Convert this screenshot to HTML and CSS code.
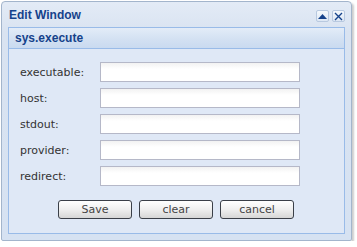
FILE: index.html
```html
<!DOCTYPE html>
<html lang="en">
<head>
  <meta charset="UTF-8">
  <title>Edit Window</title>
  <link rel="stylesheet" href="styles.css">
</head>
<body>
  <div class="window">
    <div class="window-header">
      <span class="window-title">Edit Window</span>
      <div class="tools">
        <span class="tool">
          <svg width="9" height="5" viewBox="0 0 9 5"><polygon points="0,5 4.5,0 9,5" fill="#15428b"/></svg>
        </span>
        <span class="tool">
          <svg width="9" height="9" viewBox="0 0 9 9"><path d="M1 1 L8 8 M8 1 L1 8" stroke="#15428b" stroke-width="1.4"/></svg>
        </span>
      </div>
    </div>

    <div class="panel">
      <div class="panel-header">sys.execute</div>
      <div class="panel-body">
        <div class="form-row">
          <label>executable:</label>
          <input type="text">
        </div>
        <div class="form-row">
          <label>host:</label>
          <input type="text">
        </div>
        <div class="form-row">
          <label>stdout:</label>
          <input type="text">
        </div>
        <div class="form-row">
          <label>provider:</label>
          <input type="text">
        </div>
        <div class="form-row">
          <label>redirect:</label>
          <input type="text">
        </div>

        <div class="buttons">
          <button>Save</button>
          <button>clear</button>
          <button>cancel</button>
        </div>
      </div>
    </div>
  </div>
</body>
</html>
```

FILE: styles.css
```css
* {
  box-sizing: border-box;
}

body {
  margin: 0;
  background-color: #fff;
  font-family: 'DejaVu Sans', sans-serif;
}

.window {
  margin: 1px 0 0 1px;
  width: 351px;
  height: 240px;
  border: 1px solid #a3b5cc;
  border-radius: 4px 4px 2px 2px;
  background: linear-gradient(#e3ebf6, #d9e3f1 30px, #d6e2f2);
  box-shadow: 2px 2px 2px rgba(0, 0, 0, 0.2);
  padding: 0 6px 6px 6px;
  display: flex;
  flex-direction: column;
}

.window-header {
  height: 25px;
  display: flex;
  align-items: center;
  justify-content: space-between;
  padding: 0 0 0 1px;
}

.window-title {
  font-family: 'Liberation Sans', sans-serif;
  font-size: 12px;
  font-weight: bold;
  color: #15428b;
}

.tools {
  display: flex;
  gap: 3px;
  margin-top: 3px;
}

.tool {
  width: 13px;
  height: 12px;
  border: 1px solid #b8c9e0;
  border-radius: 2px;
  background: linear-gradient(#f4f8fc, #dde7f4);
  display: flex;
  align-items: center;
  justify-content: center;
}

.panel {
  flex: 1;
  border: 1px solid #99bbe8;
  background-color: #dfe8f6;
  display: flex;
  flex-direction: column;
}

.panel-header {
  height: 21px;
  padding: 3px 0 0 6px;
  font-family: 'Liberation Sans', sans-serif;
  font-size: 12px;
  font-weight: bold;
  color: #15428b;
  background: linear-gradient(#e3ecf8, #d2e0f2 60%, #c9daf0);
  border-bottom: 1px solid #99bbe8;
}

.panel-body {
  padding: 13px 0 0 11px;
  display: flex;
  flex-direction: column;
  gap: 6px;
}

.form-row {
  display: flex;
  align-items: center;
}

.form-row label {
  width: 80px;
  font-size: 11px;
  color: #333;
}

.form-row input {
  width: 200px;
  height: 20px;
  border: 1px solid #b5b8c8;
  background: linear-gradient(#f2f2f2, #fff 6px);
  margin: 0;
  padding: 0 3px;
}

.buttons {
  display: flex;
  justify-content: center;
  gap: 7px;
  margin: 8px 0 0 -12px;
}

.buttons button {
  width: 74px;
  height: 19px;
  border: 1px solid #3a3f48;
  border-radius: 3px;
  background: linear-gradient(#ffffff, #efefef 50%, #d6d6d6);
  font-family: 'DejaVu Sans', sans-serif;
  font-size: 11px;
  color: #444;
  padding: 0;
}
```
